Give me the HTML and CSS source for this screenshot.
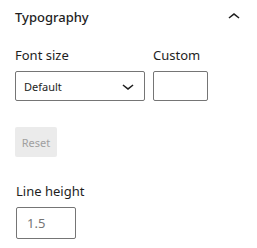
FILE: index.html
```html
<!DOCTYPE html>
<html lang="en">
<head>
  <meta charset="UTF-8" />
  <title>Typography</title>
  <link rel="stylesheet" href="styles.css">
</head>
<body>
  <div class="panel">
    <div class="panel-header">
      <span class="panel-title">Typography</span>
      <svg class="chevron" width="24" height="24" viewBox="0 0 24 24">
        <path d="M6.5 12.4L12 8l5.5 4.4-.9 1.2L12 10l-4.6 3.6z" fill="#1e1e1e"/>
      </svg>
    </div>

    <div class="font-row">
      <div class="field">
        <label class="label">Font size</label>
        <div class="select">
          <span>Default</span>
          <svg width="24" height="24" viewBox="0 0 24 24">
            <path d="M17.5 11.6L12 16l-5.5-4.4.9-1.2L12 14l4.6-3.6z" fill="#1e1e1e"/>
          </svg>
        </div>
      </div>
      <div class="field">
        <label class="label">Custom</label>
        <div class="input custom"></div>
      </div>
    </div>

    <button class="reset" disabled>Reset</button>

    <div class="field line-height">
      <label class="label">Line height</label>
      <div class="input lh">1.5</div>
    </div>
  </div>
</body>
</html>
```

FILE: styles.css
```css
body {
  margin: 0;
  font-family: "Noto Sans", sans-serif;
  color: #1e1e1e;
  background: #fff;
}
.panel {
  padding: 4px 16px 0 15px;
}
.panel-header {
  display: flex;
  justify-content: space-between;
  align-items: center;
  height: 26px;
  margin-right: -5px;
}
.panel-title {
  font-size: 13px;
  font-weight: 500;
}
.font-row {
  display: flex;
  gap: 8px;
  margin-top: 16px;
}
.field {
  display: flex;
  flex-direction: column;
}
.label {
  font-size: 13px;
  line-height: 18px;
  margin-bottom: 7px;
}
.select {
  height: 28px;
  width: 116px;
  border: 1px solid #757575;
  border-radius: 2px;
  display: flex;
  align-items: center;
  justify-content: space-between;
  padding: 0 4px 0 8px;
  font-size: 11px;
}
.input {
  border: 1px solid #757575;
  border-radius: 2px;
}
.custom {
  width: 53px;
  height: 28px;
}
.reset {
  display: block;
  margin-top: 26px;
  width: 42px;
  height: 30px;
  border: none;
  border-radius: 2px;
  background: #ebebeb;
  color: #a0a0a0;
  font-family: "Noto Sans", sans-serif;
  font-size: 11px;
  padding: 0;
}
.line-height {
  margin-top: 25px;
  margin-left: 1px;
}
.lh {
  width: 48px;
  height: 30px;
  line-height: 30px;
  padding-left: 10px;
  font-size: 13px;
  color: #757575;
}
```
